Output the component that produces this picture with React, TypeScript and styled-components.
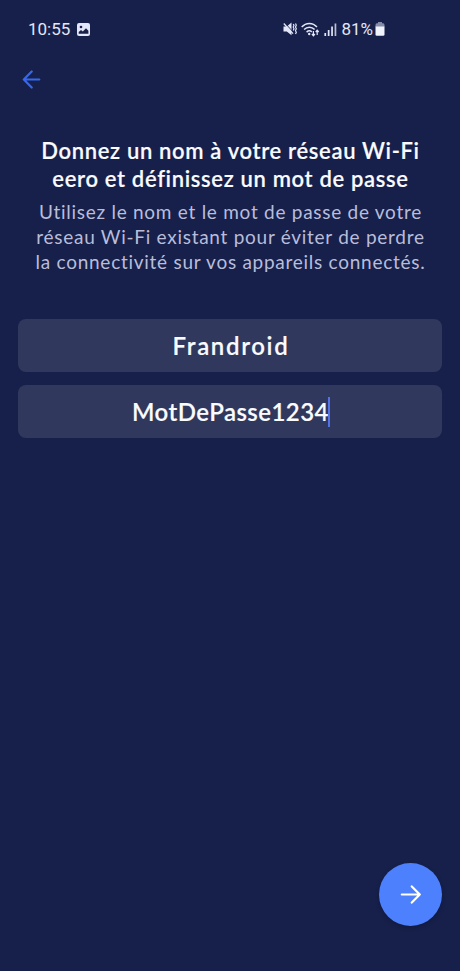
import React from "react";
import styled, { createGlobalStyle } from "styled-components";

const GlobalStyle = createGlobalStyle`
  * { box-sizing: border-box; }
  body { margin: 0; background: #17204a; }
`;

const Screen = styled.main`
  display: flex;
  flex-direction: column;
  width: 100%;
  height: 971px;
  background: #17204a;
  color: #fafbff;
  font-family: Lato, "Open Sans", sans-serif;
`;

const StatusBar = styled.header`
  display: flex;
  align-items: center;
  height: 58px;
  padding: 0 75px 0 28px;
  color: #e3e6f8;
  font: 400 17px/20px Roboto, sans-serif;
`;

const Clock = styled.span`
  margin-right: 7px;
`;

const StatusIcons = styled.div`
  display: flex;
  align-items: center;
  gap: 4px;
  margin-left: auto;
`;

const Battery = styled.div`
  display: flex;
  align-items: center;
  gap: 2px;
`;

const Icon = styled.svg`
  display: block;
  flex: none;
`;

const NavBar = styled.nav`
  display: flex;
  align-items: center;
  height: 42px;
  padding-left: 22px;
`;

const IconButton = styled.button`
  display: flex;
  padding: 0;
  border: 0;
  background: none;
  color: #3568f0;
`;

const Intro = styled.section`
  margin-top: 37px;
  padding-left: 1px;
  text-align: center;
  white-space: nowrap;
`;

const Title = styled.h1`
  margin: 0;
  font-size: 22px;
  font-weight: 600;
  line-height: 27.5px;
  letter-spacing: 0.66px;
  -webkit-text-stroke: 0.15px currentColor;
`;

const Description = styled.p`
  margin: 7px 0 0;
  color: #b9bdda;
  font-size: 19px;
  line-height: 25px;
  letter-spacing: 0.73px;
`;

const Line = styled.span`
  display: block;
`;

const Form = styled.form`
  display: flex;
  flex-direction: column;
  gap: 13px;
  margin: 45px 18px 0;
`;

const Field = styled.div<{ $spacing: number }>`
  display: flex;
  align-items: center;
  justify-content: center;
  height: 53px;
  padding-left: 2px;
  border-radius: 8px;
  background: #30385d;
  font-size: 24px;
  font-weight: 600;
  line-height: 30px;
  letter-spacing: ${(p) => p.$spacing}px;
  -webkit-text-stroke: 0.15px currentColor;
`;

const Caret = styled.i`
  width: 2px;
  height: 30px;
  margin-left: -1px;
  background: #5272e8;
`;

const Footer = styled.footer`
  display: flex;
  justify-content: flex-end;
  margin-top: auto;
  padding: 0 18px 45px;
`;

const NextButton = styled.button`
  display: flex;
  align-items: center;
  justify-content: center;
  width: 63px;
  height: 63px;
  padding: 0;
  border: 0;
  border-radius: 50%;
  background: #4d80fc;
  color: #fff;
  box-shadow: 0 2px 4px rgba(8, 14, 40, 0.3);
`;

const PictureIcon = () => (
  <Icon width="13" height="13" viewBox="0 0 13 13">
    <rect width="13" height="13" rx="2" fill="currentColor" />
    <circle cx="4" cy="4" r="1.3" fill="#17204a" />
    <path d="M1.7 10.8V9l2.3-2 1.8 1.5L9 5.3l2.4 2.5v3z" fill="#17204a" />
  </Icon>
);

const MutedIcon = () => (
  <Icon width="14" height="14" viewBox="0 0 14 14" fill="none" stroke="currentColor">
    <path d="M.5 4.5h3.3L8.5.6v12.6L3.8 9.6H.5z" fill="currentColor" stroke="none" />
    <path d="M1.6.8 10 9.8" stroke="#17204a" strokeWidth="1" />
    <path d="M.8 1.5 10 11.6" strokeWidth="1.3" />
    <path d="m10.2 2 .8 1.3-.8 1.7.8 1.8-.8 1.7M12.5 1.5l.8 1.7-.8 1.8.8 1.8-.8 1.8.8 1.8-.8 1.7" strokeWidth="1.2" />
  </Icon>
);

const WifiIcon = () => (
  <Icon width="19" height="15" viewBox="0 0 19 15" fill="none" stroke="currentColor" strokeWidth="1.5">
    <path d="M.7 5C5 .2 11.7.2 16 5M3.1 7.6c3-3.3 7.5-3.3 10.5 0M5.6 10.1c1.8-1.6 3.6-1.6 5.2-.3" />
    <circle cx="8.2" cy="12" r="1.2" fill="currentColor" stroke="none" />
    <path d="M12.4 9v4.5M10.9 12l1.5 1.8 1.5-1.8M16.2 13V8.5M14.7 10l1.5-1.8 1.5 1.8" strokeWidth="1.2" />
  </Icon>
);

const SignalIcon = () => (
  <Icon width="13" height="13" viewBox="0 0 13 13" fill="currentColor">
    <path d="M.4 10h1.7v3H.4zM3.8 7h1.7v6H3.8zM7.2 3.5h1.7V13H7.2z" />
    <path d="M10.6.5h1.7V13h-1.7z" opacity=".8" />
  </Icon>
);

const BatteryIcon = () => (
  <Icon width="10" height="14" viewBox="0 0 10 14">
    <path d="M3 0h4v1.3h1.2Q9.5 1.3 9.5 3v2h-9V3q0-1.7 1.3-1.7H3z" fill="#858ba8" />
    <path d="M.5 4.5h9v8q0 1.3-1.3 1.3H1.8Q.5 13.8.5 12.5z" fill="#f1f3fc" />
  </Icon>
);

const BackArrow = () => (
  <Icon width="19" height="19" viewBox="0 0 19 19" fill="none" stroke="currentColor" strokeWidth="2.2" strokeLinecap="round" strokeLinejoin="round">
    <path d="M17.3 9.5H2M9.7 1.5 1.8 9.5l7.9 8" />
  </Icon>
);

const NextArrow = () => (
  <Icon width="21" height="19" viewBox="0 0 21 19" fill="none" stroke="currentColor" strokeWidth="2.2" strokeLinecap="round" strokeLinejoin="round">
    <path d="M1.8 9.5h18M11.8 1.4l8 8.1-8 8.1" />
  </Icon>
);

export default function App() {
  return (
    <>
      <GlobalStyle />
      <Screen>
        <StatusBar>
          <Clock>10:55</Clock>
          <PictureIcon />
          <StatusIcons>
            <MutedIcon />
            <WifiIcon />
            <SignalIcon />
            <Battery>
              <span>81%</span>
              <BatteryIcon />
            </Battery>
          </StatusIcons>
        </StatusBar>
        <NavBar>
          <IconButton type="button" aria-label="Retour"><BackArrow /></IconButton>
        </NavBar>
        <Intro>
          <Title>
            <Line>Donnez un nom à votre réseau Wi-Fi</Line>
            <Line>eero et définissez un mot de passe</Line>
          </Title>
          <Description>
            <Line>Utilisez le nom et le mot de passe de votre</Line>
            <Line>réseau Wi-Fi existant pour éviter de perdre</Line>
            <Line>la connectivité sur vos appareils connectés.</Line>
          </Description>
        </Intro>
        <Form>
          <Field $spacing={1.65}>Frandroid</Field>
          <Field $spacing={0.45}>MotDePasse1234<Caret /></Field>
        </Form>
        <Footer>
          <NextButton type="button" aria-label="Suivant"><NextArrow /></NextButton>
        </Footer>
      </Screen>
    </>
  );
}
